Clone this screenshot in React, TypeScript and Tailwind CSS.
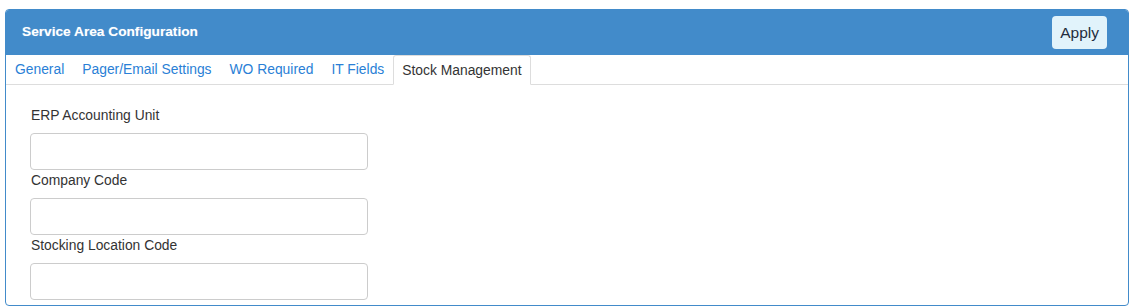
const tabs = ["General", "Pager/Email Settings", "WO Required", "IT Fields", "Stock Management"];
const active = "Stock Management";

const fields = ["ERP Accounting Unit", "Company Code", "Stocking Location Code"];

export default function App() {
  return (
    <div className="bg-white pl-[5px] pr-[6px] pt-[9px] font-['Liberation_Sans',Arial,sans-serif]">
      <div className="h-[297px] overflow-hidden rounded-[4px] border border-[#428bca]">
        <div className="flex h-[45px] items-center justify-between bg-[#428bca] pl-4 pr-[21px]">
          <div className="text-[13.7px] font-bold text-white [text-shadow:0_0_1px_rgba(255,255,255,0.4)]">
            Service Area Configuration
          </div>
          <button className="h-[33px] rounded-[4px] bg-[#e1f3fb] px-2 text-[15.5px] text-[#1f2d3d]">Apply</button>
        </div>
        <div className="flex h-[30px] items-end border-b border-[#dddddd] bg-white">
          {tabs.map((t) => (
            <div
              key={t}
              className={
                t === active
                  ? "-mb-px flex h-[30px] items-center rounded-t-[3px] border border-b-white border-[#dddddd] px-2 text-[13.85px] text-[#333333]"
                  : "flex h-[30px] items-center border border-transparent px-2 text-[13.85px] text-[#2a7fd6]"
              }
            >
              {t}
            </div>
          ))}
        </div>
        <div className="px-[24px] pt-[20px]">
          {fields.map((f) => (
            <div key={f}>
              <div className="h-5 pl-px text-[13.85px] leading-5 text-[#333333]">{f}</div>
              <input
                type="text"
                className="mt-2 block h-[37px] w-[338px] rounded-[4px] border border-[#cccccc] bg-white px-3 text-[14px] outline-none"
              />
            </div>
          ))}
        </div>
      </div>
    </div>
  );
}
